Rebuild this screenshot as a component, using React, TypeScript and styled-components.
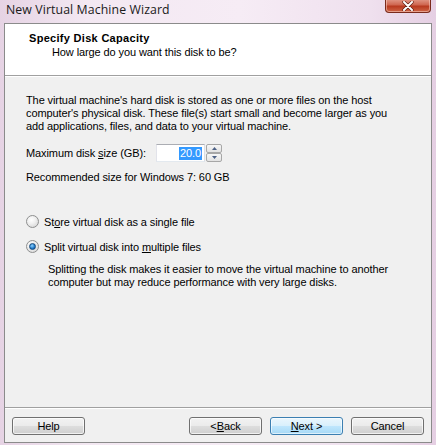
import React from "react";
import styled, { createGlobalStyle, css } from "styled-components";

const Global = createGlobalStyle`
  html, body { margin: 0; padding: 0; }
  body {
    width: 436px;
    height: 445px;
    overflow: hidden;
    background: #ead9e8;
    font-family: "Liberation Sans", Arial, sans-serif;
  }
`;

const Window = styled.div`
  width: 436px;
  height: 445px;
  display: flex;
  flex-direction: column;
  background: linear-gradient(90deg, #e6d3e4 0%, #f3e8f2 20%, #f6ecf5 55%, #efe0ee 85%, #e5cfe3 100%);
`;

const TitleBar = styled.div`
  height: 23px;
  display: flex;
  align-items: flex-start;
  padding-left: 6px;
  padding-right: 5px;
  box-sizing: border-box;
`;

const TitleText = styled.div`
  font-family: "Open Sans", "Noto Sans", sans-serif;
  font-size: 12.3px;
  line-height: 19px;
  color: #1a1a1a;
  letter-spacing: 0.1px;
`;

const CloseButton = styled.div`
  margin-left: auto;
  width: 46px;
  height: 14px;
  margin-top: -1px;
  box-sizing: border-box;
  border: 1px solid #7a2a1c;
  border-top: none;
  border-radius: 0 0 4px 4px;
  background: linear-gradient(180deg, #e29a8a 0%, #cf6650 45%, #b8391f 55%, #cf6446 100%);
  box-shadow: inset 0 0 0 1px rgba(255, 220, 210, 0.5);
  display: flex;
  align-items: center;
  justify-content: center;
`;

const FrameRow = styled.div`
  flex: 1;
  display: flex;
  padding: 0 4px 2px 4px;
`;

const Client = styled.div`
  flex: 1;
  display: flex;
  flex-direction: column;
  border: 1px solid #8b8b8b;
  background: #f0f0f0;
  font-size: 11px;
  letter-spacing: -0.1px;
  color: #000;
`;

const Header = styled.div`
  height: 52px;
  background: #ffffff;
  box-sizing: border-box;
  padding: 7px 0 0 24px;
  border-bottom: 1px solid #a0a0a0;
`;

const HeaderTitle = styled.div`
  font-weight: bold;
  font-size: 11px;
  line-height: 14px;
  letter-spacing: 0.3px;
`;

const HeaderSub = styled.div`
  font-size: 11px;
  line-height: 14px;
  padding-left: 23px;
`;

const Body = styled.div`
  flex: 1;
  display: flex;
  flex-direction: column;
  padding: 17px 20px 0 21px;
  border-top: 1px solid #ffffff;
  border-bottom: 1px solid #a0a0a0;
`;

const Para = styled.p<{ $indent?: number; $top?: number }>`
  margin: ${(p) => p.$top ?? 0}px 0 0 ${(p) => p.$indent ?? 0}px;
  line-height: 13px;
`;

const SizeRow = styled.div`
  margin-top: 11px;
  height: 18px;
  display: flex;
  align-items: center;
`;

const Label = styled.span`
  width: 130px;
`;

const Spin = styled.div`
  display: flex;
  height: 18px;
`;

const NumberBox = styled.div`
  width: 49px;
  height: 18px;
  box-sizing: border-box;
  border: 1px solid #abadb3;
  border-right-color: #dbdfe6;
  border-bottom-color: #e3e9ef;
  border-left-color: #e2e3ea;
  background: #fff;
  display: flex;
  justify-content: flex-end;
  align-items: center;
  padding-right: 2px;
`;

const Selected = styled.span`
  background: #3399ff;
  color: #fff;
  line-height: 13px;
  padding: 0 1px;
`;

const SpinButtons = styled.div`
  display: flex;
  flex-direction: column;
  width: 16px;
  margin-left: 1px;
`;

const SpinBtn = styled.div`
  flex: 1;
  box-sizing: border-box;
  border: 1px solid #a7a7a7;
  border-radius: 2px;
  background: linear-gradient(180deg, #f7f7f7, #e2e2e2);
  display: flex;
  align-items: center;
  justify-content: center;
`;

const Radios = styled.div`
  margin-top: 31px;
  display: flex;
  flex-direction: column;
  gap: 12px;
`;

const RadioRow = styled.div`
  display: flex;
  align-items: center;
  height: 13px;
  gap: 5px;
`;

const RadioCircle = styled.span<{ $checked?: boolean }>`
  width: 13px;
  height: 13px;
  box-sizing: border-box;
  border-radius: 50%;
  border: 1px solid #8e8f8f;
  background: radial-gradient(circle at 40% 35%, #ffffff 0%, #f0f0f0 40%, #cfcfcf 100%);
  display: flex;
  align-items: center;
  justify-content: center;
  flex-shrink: 0;
  ${(p) =>
    p.$checked &&
    css`
      &::after {
        content: "";
        width: 5px;
        height: 5px;
        border-radius: 50%;
        background: radial-gradient(circle at 40% 35%, #8fd3ff 0%, #1d77c8 60%, #0b4a8a 100%);
        border: 1px solid #174a7c;
      }
    `}
`;

const U = styled.span`
  text-decoration: underline;
  text-underline-offset: 1px;
`;

const Footer = styled.div`
  height: 34px;
  display: flex;
  align-items: flex-start;
  padding: 8px 7px 0 7px;
  border-top: 1px solid #ffffff;
  box-sizing: border-box;
`;

const Button = styled.div<{ $default?: boolean; $push?: boolean }>`
  width: 73px;
  height: 18px;
  box-sizing: border-box;
  margin-left: ${(p) => (p.$push ? "auto" : "8px")};
  border: 1px solid #707070;
  border-radius: 3px;
  background: linear-gradient(180deg, #f2f2f2 0%, #ebebeb 48%, #dddddd 52%, #cfcfcf 100%);
  box-shadow: inset 0 0 0 1px rgba(255, 255, 255, 0.7);
  display: flex;
  align-items: center;
  justify-content: center;
  font-size: 11px;
  line-height: 13px;
  &:first-child {
    margin-left: 0;
  }
  ${(p) =>
    p.$default &&
    css`
      border-color: #3c7fb1;
      background: linear-gradient(180deg, #eaf6fd 0%, #d9f0fc 48%, #bee6fd 52%, #a7d9f5 100%);
      box-shadow: inset 0 0 0 1px rgba(255, 255, 255, 0.6);
    `}
`;

export default function App() {
  return (
    <>
      <Global />
      <Window>
        <TitleBar>
          <TitleText>New Virtual Machine Wizard</TitleText>
          <CloseButton>
            <svg width="12" height="10" viewBox="0 0 12 10">
              <path d="M2 1 L10 9 M10 1 L2 9" stroke="#5a1a10" strokeWidth="3.2" strokeLinecap="round" />
              <path d="M2 1 L10 9 M10 1 L2 9" stroke="#ffffff" strokeWidth="2" strokeLinecap="round" />
            </svg>
          </CloseButton>
        </TitleBar>
        <FrameRow>
          <Client>
            <Header>
              <HeaderTitle>Specify Disk Capacity</HeaderTitle>
              <HeaderSub>How large do you want this disk to be?</HeaderSub>
            </Header>
            <Body>
              <Para>
                The virtual machine's hard disk is stored as one or more files on the host
                <br />
                computer's physical disk. These file(s) start small and become larger as you
                <br />
                add applications, files, and data to your virtual machine.
              </Para>
              <SizeRow>
                <Label>
                  Maximum disk <U>s</U>ize (GB):
                </Label>
                <Spin>
                  <NumberBox>
                    <Selected>20.0</Selected>
                  </NumberBox>
                  <SpinButtons>
                    <SpinBtn>
                      <svg width="5" height="3" viewBox="0 0 5 3">
                        <path d="M0 3 L2.5 0 L5 3 Z" fill="#4d6185" />
                      </svg>
                    </SpinBtn>
                    <SpinBtn>
                      <svg width="5" height="3" viewBox="0 0 5 3">
                        <path d="M0 0 L2.5 3 L5 0 Z" fill="#4d6185" />
                      </svg>
                    </SpinBtn>
                  </SpinButtons>
                </Spin>
              </SizeRow>
              <Para $top={9}>Recommended size for Windows 7: 60 GB</Para>
              <Radios>
                <RadioRow>
                  <RadioCircle />
                  <span>
                    St<U>o</U>re virtual disk as a single file
                  </span>
                </RadioRow>
                <RadioRow>
                  <RadioCircle $checked />
                  <span>
                    Split virtual disk into <U>m</U>ultiple files
                  </span>
                </RadioRow>
              </Radios>
              <Para $indent={22} $top={10}>
                Splitting the disk makes it easier to move the virtual machine to another
                <br />
                computer but may reduce performance with very large disks.
              </Para>
            </Body>
            <Footer>
              <Button>Help</Button>
              <Button $push>
                &lt; <U>B</U>ack
              </Button>
              <Button $default>
                <U>N</U>ext &gt;
              </Button>
              <Button>Cancel</Button>
            </Footer>
          </Client>
        </FrameRow>
      </Window>
    </>
  );
}
